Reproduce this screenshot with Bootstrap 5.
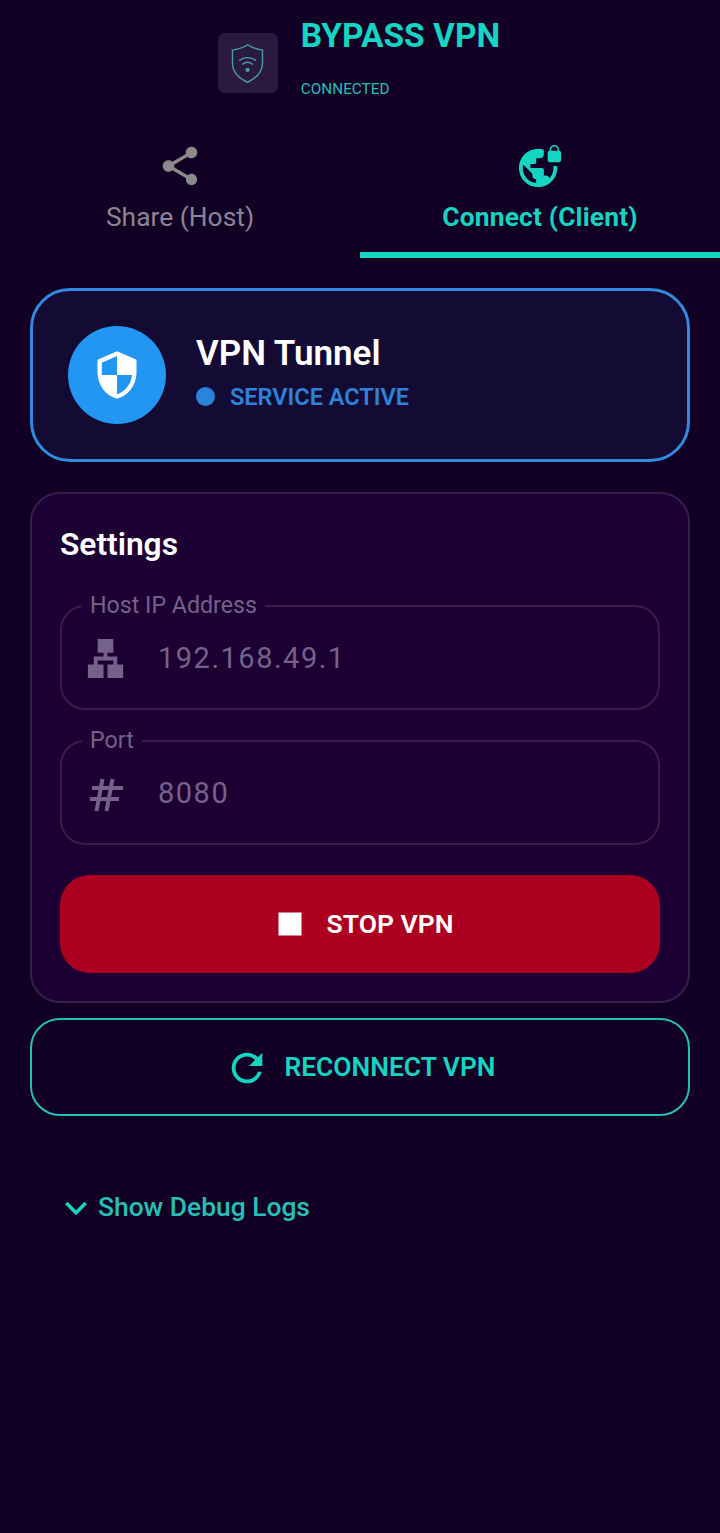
<!DOCTYPE html>
<html lang="en">
<head>
    <meta charset="UTF-8">
    <meta name="viewport" content="width=device-width, initial-scale=1.0">
    <title>Bypass VPN</title>
    <link href="https://cdn.jsdelivr.net/npm/bootstrap@5.3.0/dist/css/bootstrap.min.css" rel="stylesheet">
    <style>
        body {
            background: #120024;
            font-family: Roboto, "Liberation Sans", sans-serif;
            min-height: 1533px;
        }
        .app-header {
            height: 120px;
            gap: 23px;
            padding-right: 2px;
        }
        .app-logo {
            width: 60px;
            height: 60px;
            margin-top: 33px;
            background: #2b1a3f;
            border-radius: 7px;
        }
        .app-logo svg {
            width: 45px;
            height: 45px;
        }
        .app-title {
            margin-top: 15px;
            font-size: 33.5px;
            line-height: 42px;
            font-weight: 700;
            color: #14d4c2;
        }
        .app-status {
            margin-top: 22px;
            font-size: 15.3px;
            line-height: 20px;
            color: #24c0b8;
        }
        .mode-tab {
            height: 138px;
            padding: 6px 0 0;
            color: #8d8495;
            font-size: 26.4px;
            line-height: 36px;
            background: none;
            border: 0;
            border-bottom: 6px solid transparent;
        }
        .mode-tab svg {
            display: block;
            width: 46px;
            height: 46px;
            margin: 0 auto 10px;
            fill: #8a8a8a;
        }
        .mode-tab.active {
            color: #14d4c2;
            font-weight: 700;
            letter-spacing: .15px;
            border-bottom-color: #14d4c2;
        }
        .mode-tab.active svg {
            fill: #14d4c2;
        }
        .page-body {
            padding: 30px 30px 0;
        }
        .tunnel-box {
            height: 174px;
            padding: 0 35px;
            gap: 30px;
            background: #130b33;
            border: 3px solid #2f8ae0;
            border-radius: 40px;
        }
        .tunnel-icon {
            width: 98px;
            height: 98px;
            background: #2196f3;
        }
        .tunnel-icon svg {
            width: 52px;
            height: 52px;
            fill: #fff;
        }
        .tunnel-name {
            font-size: 35px;
            line-height: 42px;
            font-weight: 600;
            color: #fff;
        }
        .tunnel-state {
            font-size: 23.5px;
            line-height: 30px;
            font-weight: 600;
            color: #2b83dc;
            gap: 15px;
            margin-top: 7px;
            margin-bottom: 6px;
        }
        .tunnel-dot {
            width: 19px;
            height: 19px;
            background: #2b83dc;
        }
        .settings-box {
            margin-top: 30px;
            height: 511px;
            padding: 28px 28px 0;
            background: #1c0034;
            border: 2px solid #34204a;
            border-radius: 30px;
        }
        .settings-title {
            font-size: 31.7px;
            line-height: 44px;
            font-weight: 600;
            color: #fff;
            margin: 1px 0 25px;
        }
        .field-box {
            height: 118px;
            margin: 0 0 17px;
            padding: 0 0 0 20px;
            border: 2px solid #34204a;
            border-radius: 25px;
        }
        .field-box legend {
            float: none;
            width: auto;
            margin: 0;
            padding: 0 8px;
            font-size: 23.2px;
            line-height: 27px;
            color: #75628b;
        }
        .field-row {
            height: 79px;
            color: #75628b;
            font-size: 29px;
            letter-spacing: 1.5px;
        }
        .field-row svg {
            width: 47px;
            height: 47px;
            margin-right: 29px;
            flex: none;
            fill: #75628b;
        }
        .field-row svg.hash-icon {
            fill: none;
            stroke: #75628b;
            stroke-width: 4;
        }
        .stop-btn {
            margin-top: 30px;
            height: 98px;
            padding: 0;
            background: #ad0020;
            border: 0;
            border-radius: 30px;
            color: #fff;
            font-size: 26.5px;
            font-weight: 600;
            gap: 14px;
        }
        .stop-btn svg, .reconnect-btn svg {
            width: 46px;
            height: 46px;
            flex: none;
        }
        .stop-btn svg {
            fill: #fff;
        }
        .reconnect-btn {
            margin-top: 15px;
            height: 98px;
            padding: 2px 0 0;
            background: none;
            border: 2px solid #24c0b8;
            border-radius: 30px;
            color: #14d4c2;
            font-size: 26.4px;
            font-weight: 600;
            gap: 14px;
        }
        .reconnect-btn svg {
            fill: #14d4c2;
        }
        .debug-toggle {
            margin-top: 70px;
            margin-left: 24px;
            padding: 0;
            background: none;
            border: 0;
            color: #24c0b8;
            font-size: 26.4px;
            font-weight: 500;
            gap: 0;
        }
        .debug-toggle svg {
            width: 44px;
            height: 44px;
            fill: #14d4c2;
        }
    </style>
</head>
<body>
    <!-- Header -->
    <header class="app-header d-flex justify-content-center">
        <div class="app-logo d-flex align-items-center justify-content-center">
            <svg viewBox="0 0 42 42" fill="none" stroke="#4a9aa8" stroke-width="1.3">
                <path d="M21 3.500c3.500 2.500 8 4 14 5v12c0 8-5.500 14-14 18-8.500-4-14-10-14-18v-12c6-1 10.500-2.500 14-5z"/>
                <path d="M13 18.500c4.500-4 11.500-4 16 0M16 22c3-2.500 7-2.500 10 0"/>
                <circle cx="21" cy="27" r="2" fill="#4a9aa8" stroke="none"/>
            </svg>
        </div>
        <div>
            <div class="app-title">BYPASS VPN</div>
            <div class="app-status">CONNECTED</div>
        </div>
    </header>

    <!-- Tabs -->
    <nav class="nav nav-justified">
        <button class="nav-link mode-tab" type="button">
            <svg viewBox="0 0 24 24"><path d="M18 16.080c-.76 0-1.440.3-1.960.77L8.910 12.700c.05-.23.09-.46.09-.7s-.04-.47-.09-.7l7.050-4.110c.54.5 1.250.81 2.040.81 1.660 0 3-1.340 3-3s-1.340-3-3-3-3 1.340-3 3c0 .24.04.47.09.7L8.040 9.810C7.500 9.310 6.790 9 6 9c-1.660 0-3 1.340-3 3s1.340 3 3 3c.79 0 1.500-.31 2.040-.81l7.120 4.160c-.05.21-.08.43-.08.65 0 1.610 1.310 2.920 2.920 2.920s2.920-1.310 2.920-2.920-1.310-2.920-2.920-2.920z"/></svg>
            Share (Host)
        </button>
        <button class="nav-link mode-tab active" type="button">
            <svg viewBox="0 0 24 24"><path d="M22 4v-.5C22 2.120 20.880 1 19.500 1S17 2.120 17 3.500V4c-.55 0-1 .45-1 1v4c0 .55.45 1 1 1h5c.55 0 1-.45 1-1V5c0-.55-.45-1-1-1zm-.8 0h-3.400v-.5c0-.94.76-1.700 1.700-1.700s1.700.76 1.700 1.700V4zm-2.280 8c.04.33.08.66.08 1 0 2.080-.8 3.970-2.100 5.390-.26-.81-1-1.390-1.900-1.390h-1v-3c0-.55-.45-1-1-1H7v-2h2c.55 0 1-.45 1-1V8h2c1.100 0 2-.9 2-2V3.460c-.95-.3-1.950-.46-3-.46C5.480 3 1 7.480 1 13s4.480 10 10 10 10-4.480 10-10c0-.34-.02-.67-.05-1h-2.030zM10 20.930c-3.950-.49-7-3.850-7-7.930 0-.62.08-1.210.21-1.790L8 16v1c0 1.100.9 2 2 2v1.930z"/></svg>
            Connect (Client)
        </button>
    </nav>

    <main class="page-body">
        <!-- VPN status -->
        <section class="tunnel-box d-flex align-items-center">
            <div class="tunnel-icon rounded-circle d-flex align-items-center justify-content-center flex-shrink-0">
                <svg viewBox="0 0 24 24"><path d="M12 1L3 5v6c0 5.550 3.840 10.740 9 12 5.160-1.260 9-6.450 9-12V5l-9-4zm0 10.990h7c-.53 4.120-3.280 7.790-7 8.940V12H5V6.300l7-3.110v8.800z"/></svg>
            </div>
            <div>
                <div class="tunnel-name">VPN Tunnel</div>
                <div class="tunnel-state d-flex align-items-center">
                    <span class="tunnel-dot rounded-circle"></span>
                    SERVICE ACTIVE
                </div>
            </div>
        </section>

        <!-- Settings -->
        <section class="settings-box">
            <h2 class="settings-title">Settings</h2>
            <fieldset class="field-box">
                <legend>Host IP Address</legend>
                <div class="field-row d-flex align-items-center">
                    <svg viewBox="0 0 24 24"><path d="M13 22h8v-7h-3v-4h-5V9h3V2H8v7h3v2H6v4H3v7h8v-7H8v-2h8v2h-3z"/></svg>
                    192.168.49.1
                </div>
            </fieldset>
            <fieldset class="field-box">
                <legend>Port</legend>
                <div class="field-row d-flex align-items-center">
                    <svg class="hash-icon" viewBox="0 0 47 47"><path d="M20.500 9l-6 32M30.500 9l-6 32M10 18h31M8 29h29"/></svg>
                    8080
                </div>
            </fieldset>
            <button class="stop-btn btn w-100 d-flex align-items-center justify-content-center" type="button">
                <svg viewBox="0 0 24 24"><path d="M6 6h12v12H6z"/></svg>
                STOP VPN
            </button>
        </section>

        <button class="reconnect-btn btn w-100 d-flex align-items-center justify-content-center" type="button">
            <svg viewBox="0 0 24 24"><path d="M17.650 6.350C16.200 4.900 14.210 4 12 4c-4.420 0-7.990 3.580-7.990 8s3.570 8 7.990 8c3.730 0 6.840-2.550 7.730-6h-2.080c-.82 2.330-3.040 4-5.650 4-3.310 0-6-2.690-6-6s2.690-6 6-6c1.660 0 3.140.69 4.220 1.780L13 11h7V4l-2.350 2.350z"/></svg>
            RECONNECT VPN
        </button>

        <button class="debug-toggle btn d-flex align-items-center" type="button">
            <svg viewBox="0 0 24 24"><path d="M16.590 8.590L12 13.170 7.410 8.590 6 10l6 6 6-6z"/></svg>
            Show Debug Logs
        </button>
    </main>

    <script src="https://cdn.jsdelivr.net/npm/bootstrap@5.3.0/dist/js/bootstrap.bundle.min.js"></script>
</body>
</html>
